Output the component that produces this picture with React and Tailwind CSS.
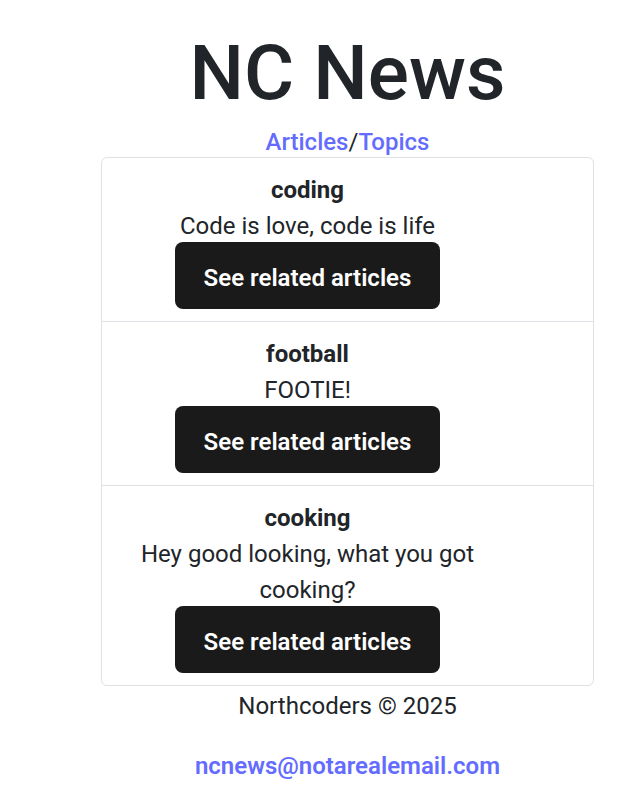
const topics = [
  { slug: "coding", description: "Code is love, code is life" },
  { slug: "football", description: "FOOTIE!" },
  { slug: "cooking", description: "Hey good looking, what you got cooking?" },
];

export default function App() {
  return (
    <div
      className="min-h-[810px] bg-white pl-[77px] text-[24px] leading-[36px] text-[#212529] flex flex-col items-center text-center"
      style={{ fontFamily: "Roboto, 'Noto Sans', sans-serif" }}
    >
      <h1 className="mt-[31px] text-[76.8px] leading-[84.5px] font-medium text-[#212529]">NC News</h1>
      <nav className="mt-[12px] leading-[28px] font-medium">
        <a className="text-[#646cff]">Articles</a>
        <span className="text-[#212529] font-normal">/</span>
        <a className="text-[#646cff]">Topics</a>
      </nav>
      <ul className="mt-[1px] w-[493px] border border-[#dee2e6] rounded-[6px] flex flex-col">
        {topics.map((t, i) => (
          <li
            key={t.slug}
            className={`px-[24px] py-[12px] ${i < topics.length - 1 ? "border-b border-[#dee2e6]" : ""}`}
          >
            <div className="w-[363px] flex flex-col items-center text-center">
              <div className="pt-[2px] -mb-[2px]">
                <h3 className="font-bold leading-[36px]">{t.slug}</h3>
                <p className="leading-[36px]">{t.description}</p>
              </div>
              <button className="h-[67px] pt-[5px] px-[28px] rounded-[8px] bg-[#1a1a1a] text-white font-semibold leading-[36px] border border-transparent">
                See related articles
              </button>
            </div>
          </li>
        ))}
      </ul>
      <footer className="mt-[2px] flex flex-col items-center">
        <p className="leading-[36px]">Northcoders © 2025</p>
        <a className="mt-[24px] leading-[36px] font-semibold text-[#646cff]">ncnews@notarealemail.com</a>
      </footer>
    </div>
  );
}
